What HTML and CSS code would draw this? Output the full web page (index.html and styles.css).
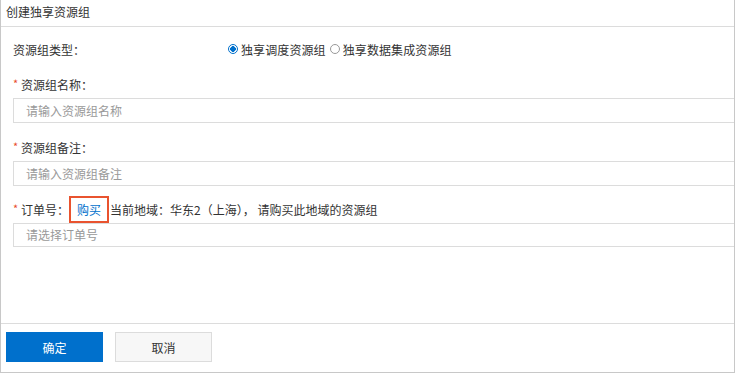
FILE: index.html
```html
<!DOCTYPE html>
<html lang="zh">
<head>
<meta charset="utf-8">
<link rel="stylesheet" href="styles.css">
</head>
<body>
<div class="dialog">
  <div class="header">创建独享资源组</div>
  <div class="form">
    <div class="type-row">
      <span class="type-label">资源组类型：</span>
      <label class="radio"><span class="dot checked"></span>独享调度资源组</label>
      <label class="radio"><span class="dot"></span>独享数据集成资源组</label>
    </div>
    <div class="field first">
      <div class="label"><span class="req">*</span>资源组名称：</div>
      <div class="input">请输入资源组名称</div>
    </div>
    <div class="field">
      <div class="label"><span class="req">*</span>资源组备注：</div>
      <div class="input in2">请输入资源组备注</div>
    </div>
    <div class="field">
      <div class="label order"><span class="req">*</span>订单号：<span class="buy">购买</span>当前地域：华东2（上海）， 请购买此地域的资源组</div>
      <div class="input in3">请选择订单号</div>
    </div>
  </div>
  <div class="footer">
    <button class="btn primary">确定</button>
    <button class="btn">取消</button>
  </div>
</div>
</body>
</html>
```

FILE: styles.css
```css
* { box-sizing: border-box; }
html, body { margin: 0; padding: 0; background: #fff; }
body {
  font-family: "Noto Sans CJK SC", "Noto Sans", sans-serif;
  font-size: 12px;
  color: #333;
}
.dialog {
  width: 735px;
  height: 373px;
  border-left: 1px solid #c8c8c8;
  border-right: 1px solid #c8c8c8;
  border-bottom: 1px solid #c8c8c8;
  display: flex;
  flex-direction: column;
  overflow: hidden;
}
.header {
  height: 27px;
  line-height: 24px;
  padding-left: 5px;
  border-bottom: 1px solid #dcdcdc;
  color: #333;
}
.form {
  flex: 1;
  padding-left: 12px;
}
.type-row {
  display: flex;
  align-items: center;
  height: 18px;
  margin-top: 13px;
}
.type-label { width: 215px; }
.radio {
  display: flex;
  align-items: center;
  margin-right: 4px;
  letter-spacing: 0.1px;
}
.dot {
  width: 10px;
  height: 10px;
  border-radius: 50%;
  border: 1px solid #999;
  margin-right: 3px;
  background: #fff;
}
.dot.checked {
  border-color: #0070cc;
  background: radial-gradient(circle, #0070cc 0 2.6px, #fff 3px);
}
.field { margin-top: 16px; }
.field.first { margin-top: 18px; }
.label {
  height: 18px;
  line-height: 18px;
  display: flex;
  align-items: center;
}
.req {
  color: #e84b2c;
  font-size: 11px;
  width: 8px;
  margin-top: -4px;
}
.input {
  margin-top: 4px;
  height: 25px;
  line-height: 23px;
  border: 1px solid #dcdcdc;
  border-right: none;
  padding-left: 12px;
  color: #999;
}
.in2 { margin-top: 4px; }
.label.order {
  height: 27px;
  margin-top: -6px;
}
.in3 { margin-top: 0; height: 24px; line-height: 22px; }
.buy {
  display: inline-block;
  height: 27px;
  line-height: 23px;
  margin-left: 0;
  margin-right: 1px;
  padding: 0 6px;
  border: 2px solid #e9532f;
  color: #0070cc;
}
.footer {
  height: 49px;
  border-top: 1px solid #dcdcdc;
  padding: 8px 0 0 5px;
  display: flex;
  gap: 12px;
}
.btn {
  width: 97px;
  height: 30px;
  font-family: inherit;
  font-size: 12px;
  border: 1px solid #dcdcdc;
  background: #f7f7f7;
  color: #333;
  padding: 0;
}
.btn.primary {
  background: #0070cc;
  border-color: #0070cc;
  color: #fff;
}
```
